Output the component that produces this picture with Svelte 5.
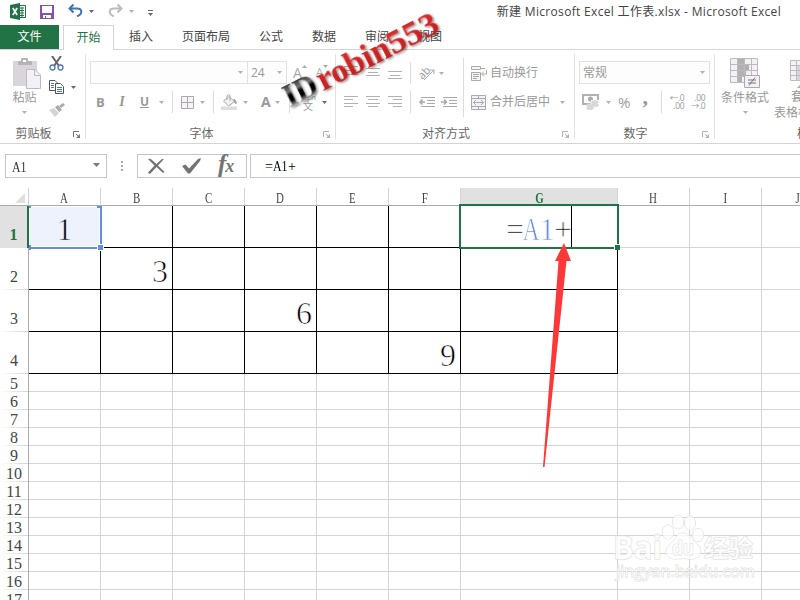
<script>
  const tabs = ['插入', '页面布局', '公式', '数据', '审阅', '视图'];
  const columns = [
    { n: 'A', w: 72 }, { n: 'B', w: 72 }, { n: 'C', w: 72 }, { n: 'D', w: 72 }, { n: 'E', w: 72 },
    { n: 'F', w: 72 }, { n: 'G', w: 157 }, { n: 'H', w: 72 }, { n: 'I', w: 72 }, { n: 'J', w: 72 }
  ];
  const values = { A1: '1', B2: '3', D3: '6', F4: '9' };
  const rows = Array.from({ length: 17 }, (_, i) => i + 1);
</script>

{#snippet caret(dark)}
  <svg class="caret" class:dark width="5" height="3" viewBox="0 0 5 3"><path d="M0 0H5L2.5 3Z" /></svg>
{/snippet}
{#snippet launcher(dark)}
  <svg class="launcher" class:dark width="8" height="8" viewBox="0 0 8 8"><path d="M.5 6V.5H6M3 3L6 6" fill="none" stroke="currentColor" /><path d="M7 3V7H3Z" fill="currentColor" /></svg>
{/snippet}
{#snippet lines(kind)}
  <svg width="15" height="14" viewBox="0 0 15 14" stroke="#b1b1b1" fill="none">
    {#if kind === 'left'}<path d="M0 1.5H14M0 4.5H9M0 8.5H14M0 11.5H9" />
    {:else if kind === 'center'}<path d="M0 1.5H14M2 4.5H12M0 8.5H14M2 11.5H12" />
    {:else if kind === 'right'}<path d="M0 1.5H14M5 4.5H14M0 8.5H14M5 11.5H14" />
    {:else if kind === 'top'}<path d="M0 .5H14M2 4.5H12M0 8.5H14" />
    {:else if kind === 'middle'}<path d="M0 2.5H14M2 6.5H12M0 9.5H14" />
    {:else}<path d="M0 5.5H14M2 9.5H12M0 12.5H14" />{/if}
  </svg>
{/snippet}
{#snippet indent(right)}
  <svg width="17" height="12" viewBox="0 0 17 12" fill="none" stroke="#aaa">
    <path d="M2 1.500H16M8 4.500H16M8 7.500H16M2 10.500H16" />
    {#if right}<path d="M0 6H5M3 3.500L5.500 6L3 8.500" stroke-width="1.600" />{:else}<path d="M1 6H6M3.500 3.500L1 6L3.500 8.500" stroke-width="1.600" />{/if}
  </svg>
{/snippet}

<div class="app">
  <header class="titlebar">
    <div class="quick">
      <svg width="17" height="17" viewBox="0 0 17 17">
        <path d="M9 2.5H15.5V14.5H9" fill="#fff" stroke="#217346" />
        <path d="M10 5H14M10 7.5H14M10 10H14M10 12.5H14M12 4V14" stroke="#217346" fill="none" />
        <path d="M0 2L10 0V17L0 15Z" fill="#217346" />
        <path d="M2.8 5L7.2 12M7.2 5L2.8 12" stroke="#fff" stroke-width="1.7" />
      </svg>
      <svg width="14" height="14" viewBox="0 0 14 14">
        <path d="M0 0H14V14H0Z" fill="#8552ab" /><path d="M2 1H12V8H2ZM3 10H11V13H6V11H5V13H3Z" fill="#fff" />
      </svg>
      <svg width="15" height="13" viewBox="0 0 15 13" fill="none" stroke="#3f73b3" stroke-width="2">
        <path d="M5.500 .5L1.500 4.500L5.500 8.500M2 4.500H9C14.500 4.500 15 10 9 12.300" />
      </svg>
      {@render caret(true)}
      <svg width="15" height="13" viewBox="0 0 15 13" fill="none" stroke="#bcbcbc" stroke-width="2">
        <path d="M9.500 .5L13.500 4.500L9.500 8.500M13 4.500H6C.5 4.500 0 10 6 12.300" />
      </svg>
      {@render caret(false)}
      <svg width="5" height="6" viewBox="0 0 5 6" fill="#666"><path d="M0 0H5V1H0ZM0 3H5L2.5 6Z" /></svg>
    </div>
    <span class="title">新建 Microsoft Excel 工作表.xlsx - Microsoft Excel</span>
  </header>

  <nav class="tabs">
    <span class="file">文件</span>
    <span class="active">开始</span>
    <div class="others">{#each tabs as tab}<span>{tab}</span>{/each}</div>
  </nav>

  <section class="ribbon">
    <div class="group clipboard">
      <div class="tools cols">
        <div class="big paste">
          <svg width="29" height="31" viewBox="0 0 29 31">
            <path d="M1 3H25V28H1Z" fill="#d8d6da" /><path d="M6 7V3H9V1Q9 0 10 0H15Q16 0 16 1V3H20V7Z" fill="#b5b5b5" /><path d="M11 2H14V4H11Z" fill="#fff" />
            <path d="M14.5 11.500H23L28.500 17V30.500H14.500Z" fill="#f5f0f8" stroke="#bbb" /><path d="M22.500 11.500V17.500H28" fill="none" stroke="#bbb" />
          </svg>
          <span>粘贴</span>
          {@render caret(false)}
        </div>
        <div class="stack">
          <svg width="15" height="15" viewBox="0 0 15 15" fill="none">
            <path d="M3 0L10 10M12 0L5 10" stroke="#666" stroke-width="2" />
            <circle cx="3.500" cy="11.500" r="2.500" stroke="#4a78ae" stroke-width="1.300" /><circle cx="11.500" cy="11.500" r="2.500" stroke="#4a78ae" stroke-width="1.300" />
          </svg>
          <div class="copy">
            <svg width="15" height="14" viewBox="0 0 15 14" fill="#fff" stroke="#555">
              <path d="M.5 .5H6L8 2.500V10.500H.5Z" /><path d="M6.500 3.500H11.500L14.500 6.500V13.500H6.500Z" />
              <path d="M2 3.500H5M2 5.500H5M2 7.500H5M8 7.500H13M8 9.500H13M8 11.500H13" stroke="#4a78ae" />
            </svg>
            {@render caret(true)}
          </div>
          <svg width="16" height="14" viewBox="0 0 16 14">
            <path d="M0 7L5 5L10 10L6 14Z" fill="#d6d3d8" /><path d="M6 4L9 2L13 7L10 9Z" fill="#aaa" /><path d="M10 3L14 0L16 2L12 5Z" fill="#aaa" />
          </svg>
        </div>
      </div>
      <div class="caption"><span>剪贴板</span>{@render launcher(true)}</div>
    </div>

    <div class="group font">
      <div class="tools">
        <div class="line first">
          <div class="combo name">{@render caret(false)}</div>
          <div class="combo size"><span>24</span>{@render caret(false)}</div>
          <span class="grow">A<svg width="5" height="3" viewBox="0 0 5 3"><path d="M0 3H5L2.500 0Z" fill="#aaa" /></svg></span>
          <span class="grow small">A<svg width="5" height="3" viewBox="0 0 5 3"><path d="M0 0H5L2.500 3Z" fill="#aaa" /></svg></span>
        </div>
        <div class="line second">
          <b class="fmt">B</b><i class="fmt it">I</i><u class="fmt un">U</u>{@render caret(false)}
          <i class="rule"></i>
          <svg width="13" height="13" viewBox="0 0 13 13" fill="#f7f3f9" stroke="#aaa"><path d="M.5 .5H12.500V12.500H.5ZM6.500 0V13M0 6.500H13" /></svg>
          {@render caret(false)}
          <i class="rule r2"></i>
          <svg width="16" height="16" viewBox="0 0 16 16" fill="none" stroke="#aaa">
            <path d="M2.500 7L8 2.500L13.500 7.500L7.500 12Z" fill="#f5f0f8" /><path d="M6 6V1.500Q7.500 0 9 1.500V7" /><path d="M13 5Q16 7 15 10L13 8Z" fill="#aaa" /><path d="M0 12.500H16V16H0Z" fill="#ddd" stroke="none" />
          </svg>
          {@render caret(false)}
          <b class="fmt color">A</b>
          {@render caret(false)}
          <i class="rule r3"></i>
          <span class="pinyin"><small>wén</small><span>文</span></span>
          {@render caret(true)}
        </div>
      </div>
      <div class="caption"><span>字体</span>{@render launcher(false)}</div>
    </div>

    <div class="group align">
      <div class="tools">
        <div class="line first">
          {@render lines('top')}{@render lines('middle')}{@render lines('bottom')}
          <i class="rule"></i>
          <svg class="orient" width="16" height="15" viewBox="0 0 16 15"><text x="-1" y="10" transform="rotate(-45 6 7)" font-size="11" font-family="Open Sans, sans-serif" fill="#999">ab</text><path d="M5 14L15 4M11 4H15V8" stroke="#aaa" fill="none" /></svg>
          {@render caret(false)}
          <i class="rule tall"></i>
          <svg width="16" height="15" viewBox="0 0 16 15" fill="#f7f3f9" stroke="#aaa">
            <path d="M.5 .5H9.500V3.500H.5Z" /><path d="M.5 6.500H9.500V14.500H.5Z" /><path d="M2 8.500H8M2 10.500H8M2 12.500H6M10 2.500H14M15.500 4V8H11M13 5.500L10.500 8L13 10.500" fill="none" />
          </svg>
          <span class="lbl">自动换行</span>
        </div>
        <div class="line second">
          {@render lines('left')}{@render lines('center')}{@render lines('right')}
          <i class="rule"></i>
          {@render indent(false)}{@render indent(true)}
          <i class="rule tall"></i>
          <svg width="15" height="15" viewBox="0 0 15 15" fill="#f5f0f8" stroke="#aaa"><path d="M.5 .5H14.500V14.500H.5ZM0 3.500H15M0 11.500H15M7.500 0V3M7.500 12V15M2 7.500H13M5 5L2.500 7.500L5 10M10 5L12.500 7.500L10 10" /></svg>
          <span class="lbl">合并后居中</span>
          {@render caret(false)}
        </div>
      </div>
      <div class="caption"><span>对齐方式</span>{@render launcher(false)}</div>
    </div>

    <div class="group number">
      <div class="tools">
        <div class="line first"><div class="combo general"><span>常规</span>{@render caret(false)}</div></div>
        <div class="line second">
          <svg width="17" height="16" viewBox="0 0 17 16">
            <path d="M1 1H16V10H1Z" fill="none" stroke="#b1b1b1" stroke-width="2" /><circle cx="8.500" cy="5" r="2.500" fill="#aaa" /><path d="M9 6H17V13H9Z" fill="#fff" />
            <g fill="#ddd8df" stroke="#ccc" stroke-width=".5"><ellipse cx="13" cy="8" rx="3.500" ry="1.500" /><ellipse cx="13" cy="11" rx="3.500" ry="1.500" /><ellipse cx="8" cy="11" rx="3.500" ry="1.500" /><ellipse cx="8" cy="14" rx="3.500" ry="1.500" /></g>
          </svg>
          {@render caret(false)}
          <span class="percent">%</span><b class="comma">,</b>
          <i class="rule"></i>
          <span class="decimal"><span>←.0</span><span>.00</span></span>
          <span class="decimal"><span>.00</span><span>→.0</span></span>
        </div>
      </div>
      <div class="caption"><span>数字</span>{@render launcher(false)}</div>
    </div>

    <div class="group styles">
      <div class="tools cols">
        <div class="big cond">
          <svg width="31" height="31" viewBox="0 0 31 31" stroke="#bbb" fill="#f5f0f8">
            <path d="M.5 .5H27.500V24.500H.5Z" /><path d="M8 1H14V6H19V12H16V18H12V24H8Z" fill="#b1b1b1" stroke="none" />
            <path d="M0 6.500H28M0 12.500H28M0 18.500H28M7.500 0V25M14.500 0V25M21.500 0V25" fill="none" />
            <path d="M14.500 17.500H29.500V29.500H14.500Z" stroke="#aaa" /><path d="M18 22H26M18 25H26M25 19.500L19 27.500" stroke="#777" fill="none" />
          </svg>
          <span>条件格式</span>
          {@render caret(false)}
        </div>
        <div class="big table">
          <svg width="31" height="29" viewBox="0 0 31 29" stroke="#bbb" fill="#f5f0f8"><path d="M.5 .5H27.500V20.500H.5Z" /><path d="M7 6H28V20H7Z" fill="#d8d6da" stroke="none" /><path d="M0 5.500H28M0 10.500H28M0 15.500H28M6.500 0V21M13.500 0V21" fill="none" /><path d="M7 28L13 22V28Z" fill="#aaa" stroke="none" /></svg>
          <span class="upper">套用</span><span>表格格式</span>
        </div>
      </div>
      <div class="caption"><span>样式</span></div>
    </div>
  </section>

  <section class="formula">
    <div class="namebox"><span class="sim">A1</span><svg width="7" height="4" viewBox="0 0 7 4"><path d="M0 0H7L3.500 4Z" fill="#777" /></svg></div>
    <svg class="dots" width="2" height="10" viewBox="0 0 2 10" fill="#aaa"><path d="M0 0H2V2H0ZM0 4H2V6H0ZM0 8H2V10H0Z" /></svg>
    <div class="buttons">
      <svg width="18" height="16" viewBox="0 0 18 16" fill="#737373"><path d="M1 1Q3 0 5 2L9.500 6L15 1H17L11 7.500L17.500 14L16 15L9.500 9L3.500 15.500Q1 16 1 14.500L7.500 7.500Z" /></svg>
      <svg width="19" height="16" viewBox="0 0 19 16" fill="#737373"><path d="M0 8L3.500 6.500L7 10.500L16 1L19 0L18 3L8 15.500H6Z" /></svg>
      <span class="fx"><span>f</span><small>x</small></span>
    </div>
    <div class="input"><span class="eq">=</span><span class="sim">A1</span><span class="eq">+</span></div>
  </section>

  <section class="sheet">
    <div class="row head">
      <div class="corner"><svg width="10" height="10" viewBox="0 0 10 10"><path d="M10 0V10H0Z" fill="#dfdfdf" /></svg></div>
      {#each columns as col}
        <div class="colhead" class:on={col.n === 'G'} style:width="{col.w}px"><span>{col.n}</span></div>
      {/each}
    </div>
    {#each rows as r}
      <div class="row" class:tall={r < 5}>
        <div class="rowhead" class:on={r === 1}><span>{r}</span></div>
        {#each columns as col, c}
          <div class="cell" class:dark={r < 5 && c < 7} class:centered={r === 1} style:width="{col.w}px">
            {#if r === 1 && col.n === 'G'}
              <div class="edit"><span>=</span><span class="ref">A</span><span class="ref one">1</span><span>+</span><i></i></div>
              <div class="selection"></div><div class="handle"></div>
            {:else}
              {#if r === 1 && c === 0}<div class="refbox"><i class="tl"></i><i class="tr"></i><i class="bl"></i><i class="br"></i></div>{/if}
              <span class="value">{values[col.n + r] ?? ''}</span>
            {/if}
          </div>
        {/each}
      </div>
    {/each}
  </section>

  <svg class="overlay" width="800" height="600" viewBox="0 0 800 600">
    <defs>
      <linearGradient id="ink" x1="0" y1="0" x2="0" y2="1"><stop offset="0.2" stop-color="#333" /><stop offset=".4" stop-color="#777" /><stop offset=".5" stop-color="#000" /><stop offset=".65" stop-color="#000" /><stop offset=".8" stop-color="#aaa" /></linearGradient>
      <linearGradient id="red" x1="0" y1="0" x2="0" y2="1"><stop offset="0" stop-color="#e62e2e" /><stop offset="1" stop-color="#b81c1c" /></linearGradient>
      <filter id="shade" x="-10%" y="-30%" width="120%" height="170%"><feDropShadow dx="1" dy="1.500" stdDeviation="1" flood-color="#000" flood-opacity=".5" /></filter>
    </defs>
    <path d="M564 243L571 261H566.500L544.500 467H543L558.500 261H555Z" fill="#fc3838" />
    <g transform="translate(290 108) rotate(-27)" font-family="Liberation Serif, serif" font-weight="700" font-size="34" filter="url(#shade)">
      <text x="0" y="0" fill="url(#ink)" textLength="34" lengthAdjust="spacingAndGlyphs">ID</text>
      <text x="37" y="0" fill="url(#red)" textLength="79" lengthAdjust="spacingAndGlyphs">robin</text>
      <text x="116" y="0" fill="url(#red)" textLength="54" lengthAdjust="spacingAndGlyphs">553</text>
    </g>
    <g class="mark" fill="#fff" fill-opacity=".75" stroke="#dcdcdc" stroke-width="1">
      <text x="613" y="559" font-size="33" font-weight="700" textLength="49" lengthAdjust="spacingAndGlyphs">Bai</text>
      <ellipse cx="668" cy="532" rx="5.500" ry="7" /><ellipse cx="678" cy="522" rx="5.500" ry="7" /><ellipse cx="690" cy="523" rx="5.500" ry="7" /><ellipse cx="698" cy="535" rx="5.500" ry="6.500" />
      <path d="M683 533C690 533 692 541 698 545C704 551 699 560 691 559Q683 558 676 559C667 560 663 551 669 545C675 541 676 533 683 533Z" />
      <text x="672" y="555" font-size="20" font-weight="700" textLength="22" lengthAdjust="spacingAndGlyphs">du</text>
      <text x="704" y="557" font-size="24" font-weight="700" textLength="49" lengthAdjust="spacingAndGlyphs">经验</text>
      <text x="616" y="577" font-size="16.500" textLength="139" lengthAdjust="spacingAndGlyphs">jingyan.baidu.com</text>
    </g>
  </svg>
</div>

<style>
  .app { position: relative; width: 800px; height: 600px; overflow: hidden; background: #fff; color: #444; font: 12px/16px "Open Sans", "Noto Sans CJK SC", sans-serif; display: flex; flex-direction: column; box-sizing: border-box; }
  .app :global(*) { box-sizing: border-box; }
  svg { display: block; flex: none; }
  .caret { fill: #b1b1b1; }
  .caret.dark { fill: #666; }
  .launcher { color: #b1b1b1; }
  .launcher.dark { color: #777; }
  .titlebar { height: 25px; flex: none; display: flex; align-items: center; justify-content: space-between; padding: 0 19px 2px 10px; }
  .quick { display: flex; align-items: center; }
  .quick svg:nth-child(2) { margin-left: 13px; }
  .quick svg:nth-child(3) { margin-left: 14px; margin-top: -2px; }
  .quick svg:nth-child(4) { margin-left: 6px; margin-top: -1px; }
  .quick svg:nth-child(5) { margin-left: 14px; margin-top: -2px; }
  .quick svg:nth-child(6) { margin-left: 6px; margin-top: -1px; }
  .quick svg:nth-child(7) { margin-left: 14px; margin-top: 2px; }
  .title { white-space: nowrap; letter-spacing: .32px; }
  .tabs { height: 25px; flex: none; display: flex; line-height: 24px; text-align: center; border-bottom: 1px solid #d4d4d4; }
  .file { width: 59px; background: #217346; color: #fff; margin-right: 4px; }
  .active { width: 51px; height: 25px; border: 1px solid #d4d4d4; border-bottom: 0; background: #fff; color: #217346; line-height: 23px; }
  .others { display: flex; gap: 29px; margin-left: 15px; }
  .ribbon { height: 94px; flex: none; display: flex; border-bottom: 1px solid #d4d4d4; padding-top: 4px; overflow: hidden; }
  .group { height: 85px; flex: none; border-right: 1px solid #e1e1e1; display: flex; flex-direction: column; color: #999; }
  .clipboard { width: 86px; } .font { width: 250px; } .align { width: 239px; } .number { width: 140px; } .styles { width: 180px; border: 0; }
  .tools { height: 70px; flex: none; }
  .cols { display: flex; }
  .caption { height: 15px; display: flex; justify-content: center; color: #666; position: relative; line-height: 19px; padding-right: 18px; }
  .styles .caption { padding: 0 0 0 8px; }
  .caption .launcher { position: absolute; right: 4px; top: 7px; }
  .big { display: flex; flex-direction: column; align-items: center; flex: none; line-height: 17px; white-space: nowrap; }
  .paste { width: 29px; margin: 4px 0 0 12px; }
  .paste span { margin-left: -4px; }
  .paste .caret { margin: 5px 4px 0 0; }
  .stack { display: flex; flex-direction: column; gap: 9px; margin: 2px 0 0 8px; }
  .copy { display: flex; align-items: center; gap: 7px; }
  .line { display: flex; align-items: center; }
  .first { height: 34px; padding-top: 3px; }
  .second { height: 28px; }
  .rule { width: 1px; height: 22px; background: #dcdcdc; flex: none; }
  .combo { height: 23px; border: 1px solid #e1e1e1; display: flex; align-items: center; justify-content: space-between; padding: 0 4px; color: #999; background: #fdfdfd; flex: none; }
  .name { width: 158px; margin-left: 4px; justify-content: flex-end; }
  .size { width: 40px; margin-left: -1px; padding-left: 3px; }
  .general { width: 131px; margin-left: 4px; padding-left: 3px; }
  .grow { display: flex; font-size: 14px; margin-left: 6px; color: #aaa; align-items: flex-start; }
  .small { font-size: 12px; margin-left: 9px; }
  .fmt { width: 8px; text-align: center; font-size: 13px; color: #999; flex: none; }
  .font .second { padding-left: 10px; }
  .it { margin-left: 14px; font-family: "Liberation Serif", serif; font-weight: 700; font-size: 14px; }
  .un { margin-left: 14px; font-weight: 700; font-size: 12px; }
  .font .second .caret { margin-left: 11px; }
  .font .second .rule { margin: 0 8px 0 8px; }
  .font .second .rule.r2 { margin: 0 7px 0 8px; }
  .font .second .caret:nth-of-type(n+3) { margin-left: 6px; }
  .color { margin-left: 13px; font-size: 14px; }
  .font .second .rule.r3 { margin: 0 10px 0 9px; }
  .pinyin { display: flex; flex-direction: column; width: 16px; font-size: 10px; line-height: 11px; align-items: center; }
  .pinyin small { font-size: 8px; line-height: 9px; }
  .align .line { padding-left: 8px; }
  .align .line > svg { margin-right: 7px; }
  .align .first { padding-top: 4px; }
  .align .line > .rule { margin: 0 8px 0 0; }
  .align .line > .rule.tall { height: 30px; margin: 0 7px 0 12px; }
  .align .second > .rule.tall { margin-left: 0; }
  .align .line > .orient { margin-right: 4px; }
  .align .second svg:nth-of-type(4), .align .second svg:nth-of-type(5) { margin-right: 5px; }
  .align .line > .caret { margin-right: 7px; }
  .align .line > .lbl { margin-left: -4px; }
  .align .second > .lbl { margin-right: 10px; margin-left: -3px; }
  .lbl { white-space: nowrap; }
  .number .second { padding-left: 7px; }
  .number .second .caret { margin-left: 7px; }
  .percent { font-size: 15px; margin-left: 7px; }
  .comma { font: 700 22px/14px "Liberation Serif", serif; width: 6px; margin: -10px 0 0 12px; }
  .number .rule { margin: 0 7px 0 13px; }
  .decimal { display: flex; flex-direction: column; font-size: 8.500px; line-height: 8px; width: 15px; margin-right: 6px; align-items: flex-end; white-space: nowrap; letter-spacing: -.3px; }
  .cond { width: 48px; margin: 4px 0 0 6px; }
  .cond .caret { margin-top: 5px; }
  .table { width: 60px; margin: 6px 0 0 4px; line-height: 16px; align-items: flex-start; }
  .table svg { margin-left: 17px; }
  .table span { margin-left: 1px; }
  .table .upper { margin-left: 18px; }
  .formula { display: flex; height: 24px; margin: 10px 0; flex: none; align-items: center; color: #333; font-family: "Liberation Serif", "Noto Sans CJK SC", serif; }
  .namebox, .buttons, .input { height: 24px; border: 1px solid #c6c6c6; display: flex; align-items: center; flex: none; }
  .namebox { width: 102px; margin-left: 5px; padding: 3px 6px 0; justify-content: space-between; }
  .namebox svg { margin-top: -6px; }
  .sim { font-size: 14px; display: inline-block; transform: scaleX(.85); transform-origin: left; }
  .dots { margin: 0 14px 0 14px; }
  .buttons { width: 110px; padding: 0 9px; gap: 17px; }
  .fx { font: italic 700 25px/20px "Liberation Serif", serif; color: #737373; display: flex; align-items: baseline; margin-top: -3px; }
  .fx small { font-size: 18px; margin-left: -1px; }
  .input { width: 560px; margin-left: 3px; padding: 2px 0 0 14px; color: #000; }
  .input .sim { width: 15px; }
  .eq { font-size: 14px; width: 8px; text-align: center; }
  .sheet { font-family: "Liberation Serif", "Noto Sans CJK SC", serif; flex: none; }
  .row { display: flex; height: 18px; width: 840px; }
  .row.tall { height: 42px; }
  .corner { width: 29px; height: 18px; border-right: 1px solid #d0d0d0; border-bottom: 1px solid #ababab; display: flex; justify-content: flex-end; padding: 5px 3px 0 0; }
  .colhead { height: 18px; border-bottom: 1px solid #ababab; border-right: 1px solid #d4d4d4; text-align: center; font-size: 14px; line-height: 21px; flex: none; }
  .colhead span { display: inline-block; transform: scaleX(.78); }
  .colhead.on { background: #e1e1e1; color: #217346; font-weight: 700; }
  .rowhead { width: 29px; flex: none; border-right: 1px solid #ababab; font-size: 16px; display: flex; align-items: flex-end; justify-content: center; line-height: 16px; background: linear-gradient(90deg, #fff, #d4d4d4) bottom / 100% 1px no-repeat; }
  .tall .rowhead { padding-bottom: 5px; }
  .rowhead.on { background: #e1e1e1; color: #217346; font-weight: 700; border-right: 2px solid #217346; }
  .cell { flex: none; border-right: 1px solid #d4d4d4; border-bottom: 1px solid #d4d4d4; position: relative; display: flex; justify-content: flex-end; align-items: center; padding-right: 4px; color: #000; font-size: 32px; line-height: 36px; }
  .cell.dark { border-color: #000; }
  .cell.centered { justify-content: center; padding: 0; }
  .value { position: relative; top: 2px; z-index: 2; -webkit-text-stroke: .7px #fff; }
  .centered .value { -webkit-text-stroke-color: #edf2fd; }
  .refbox { position: absolute; left: 0; top: 0; width: 73px; height: 43px; border: solid #638de6; border-width: 0 2px 2px 0; background: #edf2fd; box-shadow: inset 0 0 0 1px #fff; z-index: 1; }
  .refbox i { position: absolute; width: 2px; height: 2px; background: #638de6; }
  .refbox .tl { left: 0; top: 0; } .refbox .tr { right: -2px; top: 0; width: 5px; } .refbox .bl { left: 0; bottom: -3px; height: 5px; }
  .refbox .br { right: -4px; bottom: -4px; width: 7px; height: 7px; border: 1px solid #fff; }
  .edit { display: flex; position: relative; top: 2px; }
  .edit span { width: 16px; display: flex; justify-content: center; font-size: 32px; -webkit-text-stroke: .7px #fff; }
  .edit .ref { color: #638de6; transform: scaleX(.72); }
  .edit .one { transform: none; }
  .edit i { position: absolute; right: -1px; top: -5px; width: 1px; height: 41px; background: #000; }
  .selection { position: absolute; left: -2px; top: -2px; width: 160px; height: 45px; border: 2px solid #217346; z-index: 1; }
  .handle { position: absolute; right: -3px; bottom: -3px; width: 6px; height: 6px; background: #217346; border: solid #fff; border-width: 1px 0 0 1px; z-index: 1; }
  .overlay { position: absolute; left: 0; top: 0; z-index: 3; pointer-events: none; }
  .mark { font-family: "Open Sans", "Noto Sans CJK SC", sans-serif; paint-order: stroke; }
</style>
